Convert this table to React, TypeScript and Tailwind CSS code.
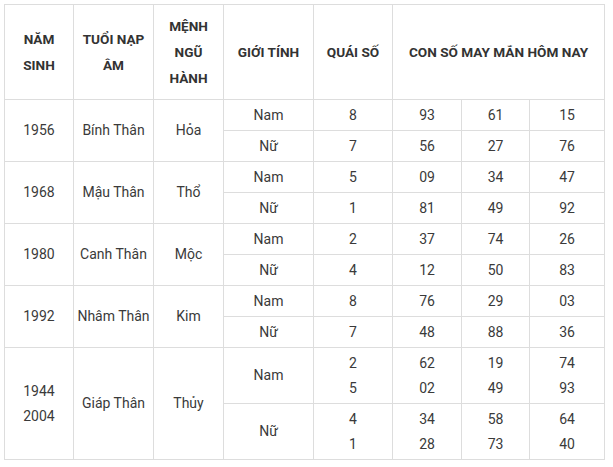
import * as React from "react";

type Row = { gt: string; qs: string; nums: string[] };
type Group = { nam: string[]; tuoi: string; menh: string; rows: Row[] };

const groups: Group[] = [
  {
    nam: ["1956"],
    tuoi: "Bính Thân",
    menh: "Hỏa",
    rows: [
      { gt: "Nam", qs: "8", nums: ["93", "61", "15"] },
      { gt: "Nữ", qs: "7", nums: ["56", "27", "76"] },
    ],
  },
  {
    nam: ["1968"],
    tuoi: "Mậu Thân",
    menh: "Thổ",
    rows: [
      { gt: "Nam", qs: "5", nums: ["09", "34", "47"] },
      { gt: "Nữ", qs: "1", nums: ["81", "49", "92"] },
    ],
  },
  {
    nam: ["1980"],
    tuoi: "Canh Thân",
    menh: "Mộc",
    rows: [
      { gt: "Nam", qs: "2", nums: ["37", "74", "26"] },
      { gt: "Nữ", qs: "4", nums: ["12", "50", "83"] },
    ],
  },
  {
    nam: ["1992"],
    tuoi: "Nhâm Thân",
    menh: "Kim",
    rows: [
      { gt: "Nam", qs: "8", nums: ["76", "29", "03"] },
      { gt: "Nữ", qs: "7", nums: ["48", "88", "36"] },
    ],
  },
];

const cell = "border border-[#dddddd] text-center align-middle p-0";
const head = cell + " text-[13.6px] leading-[26px] text-[#333333]";

function Lines({ items }: { items: string[] }) {
  return (
    <>
      {items.map((t, i) => (
        <div key={i}>{t}</div>
      ))}
    </>
  );
}

export default function App() {
  return (
    <div
      className="w-[613px] h-[467px] bg-white p-1 text-[14px] leading-[25px] text-[#3a3a3a]"
      style={{ fontFamily: "Roboto, 'Liberation Sans', sans-serif" }}
    >
      <table className="table-fixed border-collapse w-[600px]">
        <colgroup>
          <col className="w-[69px]" />
          <col className="w-[80px]" />
          <col className="w-[70px]" />
          <col className="w-[90px]" />
          <col className="w-[79px]" />
          <col className="w-[69px]" />
          <col className="w-[68px]" />
          <col className="w-[75px]" />
        </colgroup>
        <thead>
          <tr className="h-[95px] font-bold">
            <th className={head}>
              NĂM
              <br />
              SINH
            </th>
            <th className={head}>
              TUỔI NẠP
              <br />
              ÂM
            </th>
            <th className={head}>
              MỆNH
              <br />
              NGŨ
              <br />
              HÀNH
            </th>
            <th className={head}>GIỚI TÍNH</th>
            <th className={head}>QUÁI SỐ</th>
            <th className={head} colSpan={3}>
              CON SỐ MAY MẮN HÔM NAY
            </th>
          </tr>
        </thead>
        <tbody>
          {groups.map((g) =>
            g.rows.map((r, i) => (
              <tr key={g.tuoi + i} className="h-[31px]">
                {i === 0 && (
                  <>
                    <td className={cell} rowSpan={2}>
                      <Lines items={g.nam} />
                    </td>
                    <td className={cell} rowSpan={2}>
                      {g.tuoi}
                    </td>
                    <td className={cell} rowSpan={2}>
                      {g.menh}
                    </td>
                  </>
                )}
                <td className={cell}>{r.gt}</td>
                <td className={cell}>{r.qs}</td>
                {r.nums.map((n, k) => (
                  <td key={k} className={cell}>
                    {n}
                  </td>
                ))}
              </tr>
            ))
          )}
          <tr className="h-[56px]">
            <td className={cell} rowSpan={2}>
              <Lines items={["1944", "2004"]} />
            </td>
            <td className={cell} rowSpan={2}>
              Giáp Thân
            </td>
            <td className={cell} rowSpan={2}>
              Thủy
            </td>
            <td className={cell}>Nam</td>
            <td className={cell}>
              <Lines items={["2", "5"]} />
            </td>
            <td className={cell}>
              <Lines items={["62", "02"]} />
            </td>
            <td className={cell}>
              <Lines items={["19", "49"]} />
            </td>
            <td className={cell}>
              <Lines items={["74", "93"]} />
            </td>
          </tr>
          <tr className="h-[56px]">
            <td className={cell}>Nữ</td>
            <td className={cell}>
              <Lines items={["4", "1"]} />
            </td>
            <td className={cell}>
              <Lines items={["34", "28"]} />
            </td>
            <td className={cell}>
              <Lines items={["58", "73"]} />
            </td>
            <td className={cell}>
              <Lines items={["64", "40"]} />
            </td>
          </tr>
        </tbody>
      </table>
    </div>
  );
}
